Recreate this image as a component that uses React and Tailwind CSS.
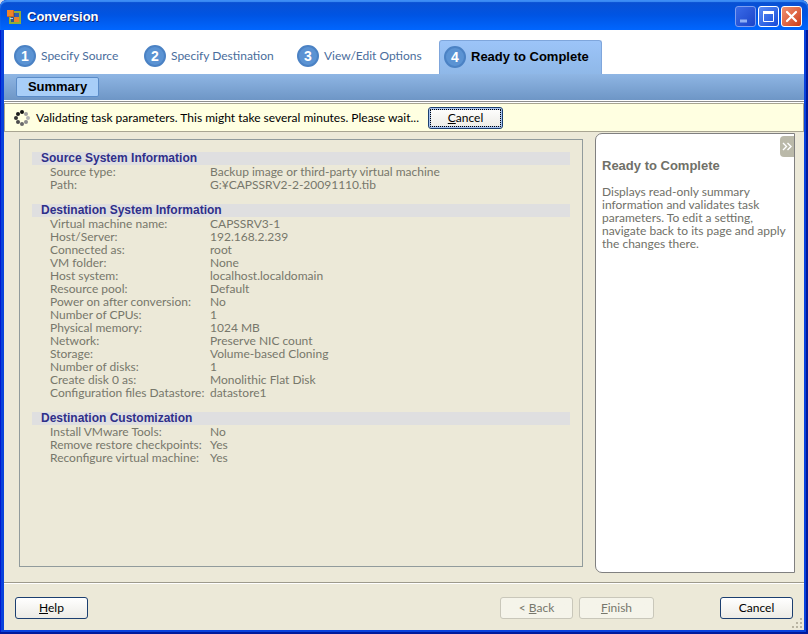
import clsx from "clsx";
import React, { useState } from "react";

const steps = [
  { label: "Specify Source", className: "w-[130px]" },
  { label: "Specify Destination", className: "w-[153px]" },
  { label: "View/Edit Options", className: "w-[142px]" },
  { label: "Ready to Complete", className: "w-[163px]" },
];

const sections = [
  {
    title: "Source System Information",
    rows: [
      ["Source type:", "Backup image or third-party virtual machine"],
      ["Path:", "G:¥CAPSSRV2-2-20091110.tib"],
    ],
  },
  {
    title: "Destination System Information",
    rows: [
      ["Virtual machine name:", "CAPSSRV3-1"],
      ["Host/Server:", "192.168.2.239"],
      ["Connected as:", "root"],
      ["VM folder:", "None"],
      ["Host system:", "localhost.localdomain"],
      ["Resource pool:", "Default"],
      ["Power on after conversion:", "No"],
      ["Number of CPUs:", "1"],
      ["Physical memory:", "1024 MB"],
      ["Network:", "Preserve NIC count"],
      ["Storage:", "Volume-based Cloning"],
      ["Number of disks:", "1"],
      ["Create disk 0 as:", "Monolithic Flat Disk"],
      ["Configuration files Datastore:", "datastore1"],
    ],
  },
  {
    title: "Destination Customization",
    rows: [
      ["Install VMware Tools:", "No"],
      ["Remove restore checkpoints:", "Yes"],
      ["Reconfigure virtual machine:", "Yes"],
    ],
  },
];

const spokes = [
  [8, 2, "#111111"],
  [12, 4, "#a0a0a0"],
  [14, 8, "#b4b4b4"],
  [12, 12, "#8c8c8c"],
  [8, 14, "#6a6a6a"],
  [4, 12, "#4c4c4c"],
  [2, 8, "#333333"],
  [4, 4, "#1c1c1c"],
];

function Spinner() {
  return (
    <svg width="16" height="16" viewBox="0 0 16 16" aria-hidden="true">
      {spokes.map(([x, y, fill]) => (
        <circle key={`${x}-${y}`} cx={x} cy={y} r="2" fill={fill} />
      ))}
    </svg>
  );
}

function AppIcon() {
  return (
    <svg width="16" height="16" viewBox="0 0 16 16" aria-hidden="true">
      <rect x="3" y="3" width="10" height="11" fill="#2e5590" stroke="#8fae3a" strokeWidth="2" />
      <rect x="8" y="4" width="4" height="4" fill="#2f5cb8" />
      <rect x="7" y="8" width="5" height="5" fill="#e8822f" />
      <rect x="0" y="1" width="7" height="7" fill="#f08428" />
      <path d="M0 7.500h7M6.500 1v7" stroke="#c4602a" />
      <path d="M3 9.500h3" stroke="#b9cbe6" />
    </svg>
  );
}

function TitleButton({ label, className, children }) {
  return (
    <button
      type="button"
      aria-label={label}
      className={clsx(
        "flex h-[21px] w-[21px] items-center justify-center rounded-[3px] border",
        className
      )}
    >
      <svg width="19" height="19" viewBox="0 0 19 19" fill="none" aria-hidden="true">
        {children}
      </svg>
    </button>
  );
}

function Button({ className, children, ...props }) {
  return (
    <button
      type="button"
      className={clsx(
        "h-[22px] rounded-[3px] border border-[#1c3f70] bg-linear-to-b from-white to-[#ecebe5] text-center leading-4 text-black",
        "disabled:border-[#c9c7ba] disabled:from-[#f5f4ea] disabled:to-[#f5f4ea] disabled:text-[#77776c]",
        className
      )}
      {...props}
    >
      {children}
    </button>
  );
}

function SummaryTable({ title, rows }) {
  return (
    <table className="w-full table-fixed border-collapse leading-[13px]">
      <caption className="bg-[#dfdfe0] pl-[9px] text-left font-['Liberation_Sans',sans-serif] font-bold text-[#2f2f8a]">
        {title}
      </caption>
      <tbody>
        {rows.map(([name, value]) => (
          <tr key={name}>
            <th scope="row" className="w-[178px] p-0 pl-[18px] text-left font-normal whitespace-nowrap">
              {name}
            </th>
            <td className="p-0 whitespace-nowrap">{value}</td>
          </tr>
        ))}
      </tbody>
    </table>
  );
}

function App() {
  const [validating, setValidating] = useState(true);

  return (
    <div className="bg-[#d8dce8] font-['Lato','Liberation_Sans',sans-serif] text-[12px]">
      <div className="flex min-h-screen flex-col rounded-t-[7px] bg-[#0842dc] shadow-[inset_-2px_-2px_0_#001a9c,inset_1px_0_0_#0019cf]">
        <header className="flex h-[30px] items-center gap-1 rounded-t-[7px] bg-linear-to-b from-[#0a4fd0] via-[#0054e3] to-[#0066ff] pt-[3px] pr-[6px] pl-[7px] shadow-[inset_0_2px_1px_#3d8df5]">
          <AppIcon />
          <h1 className="flex-1 font-['Liberation_Sans',sans-serif] text-[13px] font-bold text-white [text-shadow:1px_1px_0_#0f1f6b]">
            Conversion
          </h1>
          <div className="flex gap-[2px]">
            <TitleButton label="Minimize" className="border-[#7d9df0] bg-linear-to-br from-[#3a6be8] to-[#1c43c8]">
              <path d="M4 14h7" stroke="#8fb0f5" strokeWidth="3" />
            </TitleButton>
            <TitleButton label="Maximize" className="border-white bg-linear-to-br from-[#5b8cf5] to-[#1548d8]">
              <path d="M4 5.500h11" stroke="white" strokeWidth="3" />
              <path d="M4.500 5v9.500h10V5" stroke="white" />
            </TitleButton>
            <TitleButton label="Close" className="border-white bg-linear-to-br from-[#f09070] to-[#cc3a12]">
              <path d="M5 5l9 9M14 5l-9 9" stroke="white" strokeWidth="2.200" strokeLinecap="round" />
            </TitleButton>
          </div>
        </header>

        <div className="mx-1 mb-1 flex flex-1 flex-col bg-[#ece9d8]">
          <nav aria-label="Wizard steps" className="bg-white pt-[10px] pl-[10px]">
            <ol className="flex">
              {steps.map((step, index) => {
                const active = index === steps.length - 1;
                return (
                  <li
                    key={step.label}
                    className={clsx(
                      "h-[34px]",
                      step.className,
                      active && "rounded-t-[3px] border border-b-0 border-[#7fa6dc] bg-linear-to-b from-[#9cc4f8] to-[#8fb8e8] pl-1"
                    )}
                  >
                    <a
                      href="#"
                      aria-current={active ? "step" : undefined}
                      className={clsx(
                        "flex h-8 items-center gap-[5px] whitespace-nowrap",
                        active
                          ? "font-['Liberation_Sans',sans-serif] text-[13px] font-bold text-black"
                          : "text-[#4a6d9c]"
                      )}
                    >
                      <span className="flex h-[22px] w-[22px] items-center justify-center rounded-full border-2 border-[#4b82c4] bg-[#5b93d3] font-['Liberation_Sans',sans-serif] text-[14px] font-bold text-white">
                        {index + 1}
                      </span>
                      {step.label}
                    </a>
                  </li>
                );
              })}
            </ol>
          </nav>

          <div className="flex h-[27px] items-center border-b border-white bg-linear-to-b from-[#8fb6e4] to-[#6e96c6] pl-3">
            <button
              type="button"
              className="h-5 w-[83px] rounded-[2px] border border-[#5b8cc8] bg-[#a8cef8] font-['Liberation_Sans',sans-serif] text-[13px] leading-4 font-bold text-black"
            >
              Summary
            </button>
          </div>

          <div className="border-t border-[#8e8e8e] bg-white pt-px">
            <div className="flex h-[29px] items-center border border-[#a8a592] bg-[#ffffe1] pl-[9px]">
              {validating && (
                <>
                  <Spinner />
                  <p role="status" className="w-[398px] pl-[6px] whitespace-nowrap text-black">
                    Validating task parameters. This might take several minutes. Please wait...
                  </p>
                  <Button
                    onClick={() => setValidating(false)}
                    className="w-[75px] shadow-[inset_0_0_0_2px_#a9c4f0] outline-1 -outline-offset-3 outline-dotted outline-black"
                  >
                    <u>C</u>ancel
                  </Button>
                </>
              )}
            </div>
          </div>

          <div className="flex flex-1 gap-3 pr-[9px]">
            <main className="mt-[7px] mb-[15px] ml-[15px] flex flex-1 flex-col gap-[13px] border border-[#919b9c] p-3 text-[#77776b]">
              {sections.map((section) => (
                <SummaryTable key={section.title} {...section} />
              ))}
            </main>

            <aside className="mt-px mb-[9px] w-[200px] rounded-l-[7px] border border-[#808080] bg-white pl-[6px] text-[#707068]">
              <div className="flex justify-end pt-[2px]">
                <button
                  type="button"
                  aria-label="Hide help"
                  className="flex h-[21px] w-[14px] items-center justify-center rounded-l-[4px] bg-[#bab9a9]"
                >
                  <svg width="10" height="9" viewBox="0 0 10 9" fill="none" aria-hidden="true">
                    <path d="M1 1l3.500 3.500L1 8M5.500 1L9 4.500 5.500 8" stroke="white" strokeWidth="1.400" />
                  </svg>
                </button>
              </div>
              <h2 className="pt-px font-['Liberation_Sans',sans-serif] text-[13px] leading-4 font-bold">
                Ready to Complete
              </h2>
              <p className="pt-[11px] pr-1 leading-[13px]">
                Displays read-only summary information and validates task
                parameters. To edit a setting, navigate back to its page and apply
                the changes there.
              </p>
            </aside>
          </div>

          <footer className="flex h-12 items-start border-t border-[#9d9a8c] pt-[14px] pr-[11px] pl-[11px] shadow-[inset_0_1px_0_white]">
            <Button className="w-[73px]">
              <u>H</u>elp
            </Button>
            <div className="ml-auto flex gap-[6px]">
              <Button disabled className="w-[73px]">
                &lt; <u>B</u>ack
              </Button>
              <Button disabled className="w-[75px]">
                <u>F</u>inish
              </Button>
            </div>
            <div className="relative ml-[66px]">
              <Button className="w-[73px]">Cancel</Button>
              <svg
                className="absolute -right-[10px] -bottom-[10px]"
                width="11"
                height="11"
                viewBox="0 0 11 11"
                fill="#b8b4a2"
                aria-hidden="true"
              >
                <path d="M8 0h2v2H8zM4 4h2v2H4zM8 4h2v2H8zM0 8h2v2H0zM4 8h2v2H4zM8 8h2v2H8z" />
              </svg>
            </div>
          </footer>
        </div>
      </div>
    </div>
  );
}

export default App;
